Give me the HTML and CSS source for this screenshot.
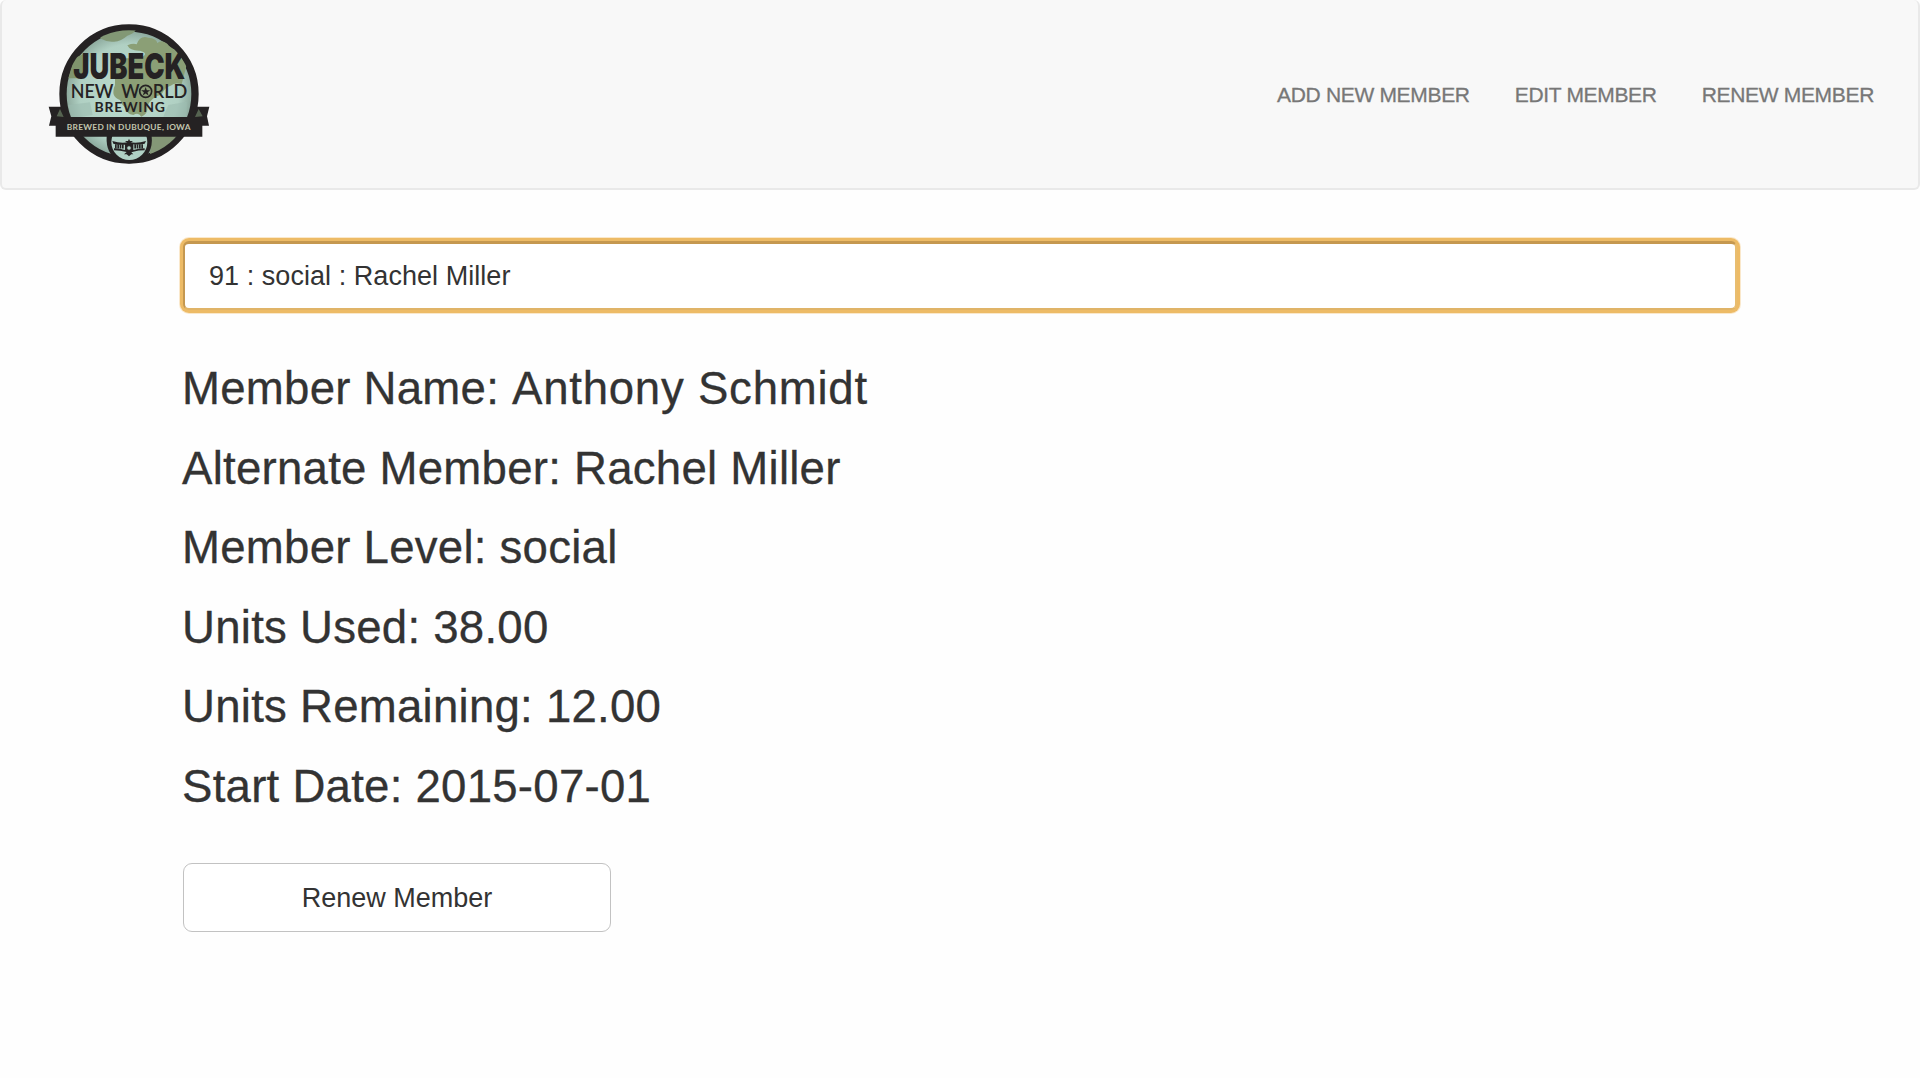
FILE: index.html
```html
<!DOCTYPE html>
<html lang="en">
<head>
<meta charset="utf-8">
<title>Renew Member</title>
<link rel="stylesheet" href="styles.css">
</head>
<body>
<nav class="navbar">
  <a class="brand" aria-label="Jubeck New World Brewing">
    <svg class="logo" viewBox="0 0 540 480">
      <defs>
        <clipPath id="globe"><circle cx="267" cy="237" r="191"/></clipPath>
        <radialGradient id="sky"><stop offset="0" stop-color="#bcdccf"/><stop offset=".75" stop-color="#b0d0c3"/><stop offset="1" stop-color="#85a195"/></radialGradient>
      </defs>
      <circle cx="267" cy="237" r="198" fill="url(#sky)" stroke="#252223" stroke-width="22"/>
      <g clip-path="url(#globe)">
        <path fill="#829875" d="M180 70Q200 82 222 80T262 62Q285 55 290 40H200Z"/>
        <path fill="#8b9f76" d="M262 91Q280 84 290 88Q300 60 325 68Q350 70 352 84Q365 72 382 86Q390 98 408 104L440 150L425 208Q405 202 392 212Q375 215 365 238Q330 250 322 275Q325 295 304 305Q295 290 280 300Q260 298 258 280Q245 270 240 255Q210 245 225 210V130H300Q330 115 300 107Q270 108 262 91Z"/>
        <path fill="#7f946d" d="M102 130L135 115V190H85Z"/>
        <path fill="#9dbdb0" d="M85 270L150 262L158 300L95 310ZM385 270L440 260V305H370Z" opacity=".6"/>
        <path fill="#849777" d="M335 362H425L390 425L328 435Z"/>
      </g>
      <path d="M201 355H334Q342 404 312 432Q268 458 226 432Q194 407 201 355Z" fill="#252223"/>
      <circle cx="268" cy="381" r="54" fill="#b0d1c5"/>
      <g fill="#252223">
        <path d="M217 378Q243 386 267 381Q292 386 318 378L314 386Q290 390 280 388V405Q296 400 314 400V406Q295 406 280 410L274 412L280 418H274L267 424L260 418H252L260 411Q240 406 222 406V400Q240 400 255 405V389Q238 391 220 386Z"/>
        <path d="M267 371l3 7h9l-7 5 3 8-8-5-8 5 3-8-7-5h9z"/>
      </g>
      <circle cx="267" cy="399" r="7" fill="#b0d1c5" stroke="#252223" stroke-width="3"/>
      <path d="M225 394H253M283 394H311" stroke="#252223" stroke-width="13" stroke-dasharray="5 2"/>
      <path fill="#252223" d="M26 275H68L78 306H460L469 275H508L501 304L507 332H487V365H47V332H27L34 304Z"/>
      <path fill="#566451" d="M50 304L60 282L71 306ZM465 306L476 282L488 304Z"/>
      <g fill="#252223" text-anchor="middle">
        <text class="logo-name" x="268" y="193" textLength="336" lengthAdjust="spacingAndGlyphs">JUBECK</text>
        <text class="logo-sub" x="156" y="249" textLength="128" lengthAdjust="spacingAndGlyphs">NEW</text>
        <text class="logo-sub" x="271" y="249" textLength="55" lengthAdjust="spacingAndGlyphs">W</text>
        <text class="logo-sub" x="390" y="249" textLength="104" lengthAdjust="spacingAndGlyphs">RLD</text>
        <text class="logo-brewing" x="269" y="292" textLength="211" lengthAdjust="spacing">BREWING</text>
      </g>
      <circle cx="317" cy="229" r="18" fill="none" stroke="#252223" stroke-width="5"/>
      <path fill="#252223" d="M317 216l3.500 9.500h10l-8 6 3 10-8.500-6-8.500 6 3-10-8-6h10z"/>
      <text class="logo-banner" x="266" y="345" text-anchor="middle" textLength="371" lengthAdjust="spacing">BREWED IN DUBUQUE, IOWA</text>
    </svg>
  </a>
  <div class="nav-links">
    <a>Add New Member</a>
    <a>Edit Member</a>
    <a>Renew Member</a>
  </div>
</nav>
<main class="content">
  <input class="member-search" type="text" value="91 : social : Rachel Miller">
  <section class="details">
    <h2>Member Name: <span class="member-name">Anthony Schmidt</span></h2>
    <h2>Alternate Member: Rachel Miller</h2>
    <h2>Member Level: social</h2>
    <h2>Units Used: 38.00</h2>
    <h2>Units Remaining: 12.00</h2>
    <h2>Start Date: 2015-07-01</h2>
  </section>
  <button class="renew" type="button">Renew Member</button>
</main>
</body>
</html>
```
FILE: styles.css
```css
* { box-sizing: border-box; }
body {
  margin: 0;
  background: #fefefe;
  color: #333;
  font-family: "Liberation Sans", Arial, sans-serif;
}
.navbar {
  display: flex;
  justify-content: space-between;
  align-items: center;
  height: 190px;
  padding: 2px 44px 0 38px;
  background: #f8f8f8;
  border: 2px solid #e9e9e9;
  border-top: 0 solid #f1f1f1;
  border-radius: 6px;
}
.brand { display: flex; }
.logo { width: 180px; height: 160px; }
.logo-name { font: 900 107px "Inter", sans-serif; }
.logo-sub { font: 600 59px "Lato", sans-serif; }
.logo-brewing { font: 700 42px "Lato", sans-serif; }
.logo-banner { font: 700 25px "Lato", sans-serif; fill: #c2c5ad; }
.nav-links {
  display: flex;
  gap: 45px;
  color: #777;
  font-size: 21px;
  letter-spacing: -0.32px;
  line-height: 30px;
  text-transform: uppercase;
  -webkit-text-stroke: 0.3px #777;
}
.content {
  width: 1554px;
  margin: 51px auto 0;
}
.member-search {
  display: block;
  width: 100%;
  height: 69px;
  padding: 1px 24px 0;
  border: 2px solid #c59850;
  border-top-width: 3px;
  border-right-color: #e8bd70;
  border-bottom-color: #e0b468;
  border-radius: 6px;
  outline: none;
  background: #fff;
  color: #333;
  font: 27px "Liberation Sans", Arial, sans-serif;
  letter-spacing: 0.05px;
  box-shadow: 0 0 0 3px #edbb66, 0 0 0 4px #fae8cb;
}
.details {
  display: flex;
  flex-direction: column;
  gap: 30px;
  margin-top: 54px;
}
.details h2 {
  margin: 0 0 0 -1px;
  font-size: 45.6px;
  font-weight: 400;
  letter-spacing: 0.24px;
  line-height: 49.5px;
  -webkit-text-stroke: 0.3px #333;
}
.member-name { letter-spacing: 0.75px; }
.renew {
  display: block;
  width: 428px;
  height: 69px;
  margin-top: 52px;
  padding: 2px 0 0;
  border: 1px solid #c2c2c2;
  border-radius: 9px;
  background: #fff;
  color: #333;
  font: 27px "Liberation Sans", Arial, sans-serif;
}
```
